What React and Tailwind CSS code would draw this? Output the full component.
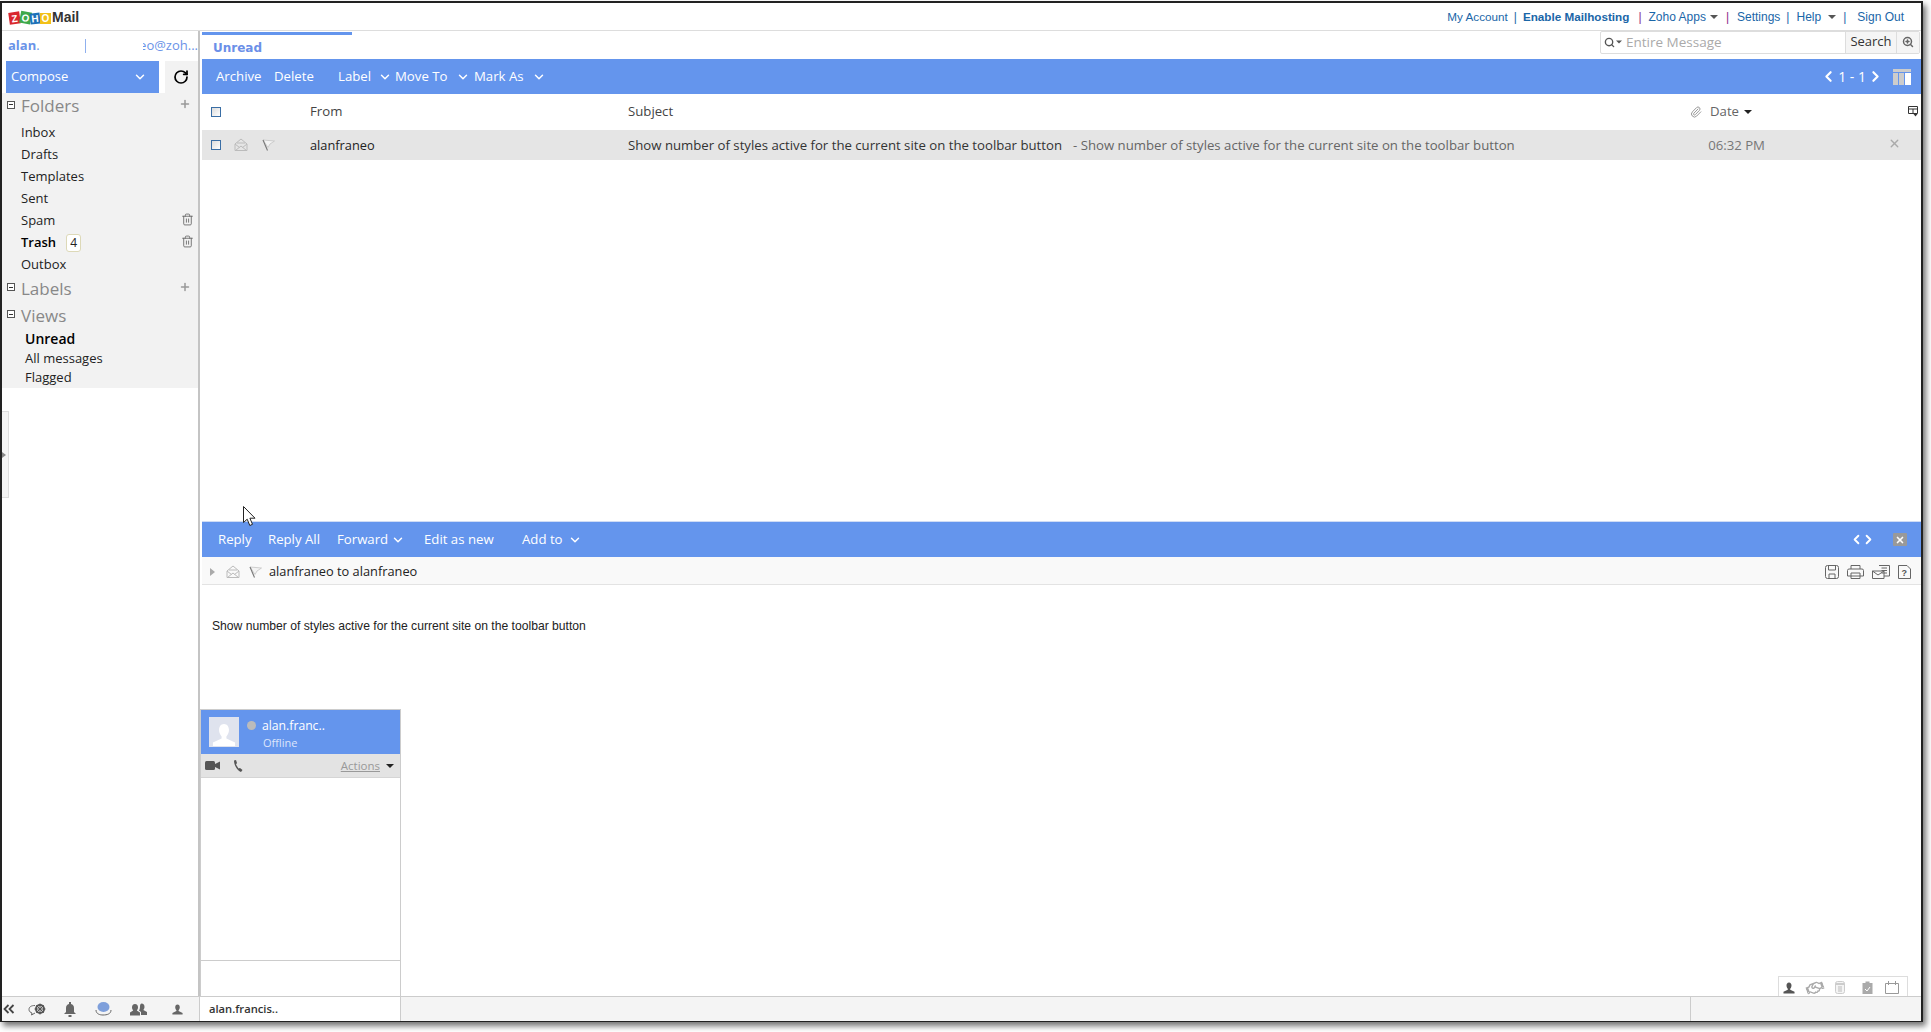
import React from "react";
import { ChevronDown, ChevronLeft, ChevronRight, Plus, RotateCw, Trash2, X, Paperclip, Search, ZoomIn } from "lucide-react";
import { FaRegHandshake } from "react-icons/fa";

const Chev = ({ className = "" }) => <ChevronDown size={14} strokeWidth={2.5} className={`text-white ${className}`} />;
const Caret = ({ className = "" }) => (
  <span className={`inline-block w-0 h-0 border-l-[4px] border-r-[4px] border-t-[4px] border-l-transparent border-r-transparent ${className}`} />
);
const Minus = () => (
  <span className="flex items-center justify-center w-[8px] h-[8px] border border-[#555] bg-white shrink-0">
    <span className="w-[4px] h-px bg-[#333]" />
  </span>
);
const Check = () => <span className="block w-[10px] h-[10px] border border-[#3a6ea5] bg-gradient-to-br from-[#dcdcdc] to-white" />;
const Env = ({ c = "#bbb" }) => (
  <svg width="14" height="14" viewBox="0 0 14 14" fill="none" stroke={c} strokeWidth="1">
    <path d="M1 6 L7 1 L13 6 V12.5 H1 Z M1 6 L5.5 9.5 M13 6 L8.5 9.5 M1.5 12.5 L7 8 L12.5 12.5 M3 5 H11" />
  </svg>
);
const Flag = () => (
  <svg width="13" height="12" viewBox="0 0 13 12">
    <path d="M1 1 L12.5 2 L8 5 L6 8.5 Z" fill="#f3f3f3" stroke="#c4c4c4" strokeWidth="0.8" />
    <path d="M1 1 L5.5 11.5" stroke="#777" strokeWidth="1.1" />
  </svg>
);
const Logo = () => (
  <svg width="43" height="16" viewBox="0 0 43 16">
    <g transform="rotate(-8 7 8)"><rect x="1" y="2" width="11" height="12" fill="#d9272e" /><text x="6.5" y="12" fontSize="10" fontWeight="700" fill="#fff" textAnchor="middle" fontFamily="Liberation Sans">Z</text></g>
    <g transform="rotate(10 17 8)"><rect x="12" y="1.5" width="11" height="12" fill="#3ea94a" /><text x="17.5" y="11.5" fontSize="10" fontWeight="700" fill="#fff" textAnchor="middle" fontFamily="Liberation Sans">O</text></g>
    <g transform="rotate(-6 28 8)"><rect x="22" y="3" width="10" height="11" fill="#1d71b8" /><text x="27" y="12" fontSize="10" fontWeight="700" fill="#fff" textAnchor="middle" fontFamily="Liberation Sans">H</text></g>
    <g><rect x="32" y="3" width="11" height="11" fill="#f2c018" /><text x="37.5" y="12" fontSize="10" fontWeight="700" fill="#fff" textAnchor="middle" fontFamily="Liberation Sans">O</text></g>
  </svg>
);
const Sep = ({ c = "text-[#1a66a8]", className = "" }) => <span className={`${c} ${className}`}>|</span>;

const Folder = ({ name, bold, trash, badge }) => (
  <div className={`flex items-center h-[22px] pl-[19px] pr-[3px] text-[13px] text-[#222] ${bold ? "font-semibold text-black" : ""}`}>
    <span>{name}</span>
    {badge && <span className="ml-[10px] flex items-center justify-center w-[15px] h-[18px] rounded-[3px] border border-[#ddd9b8] bg-white text-[12px] font-normal text-[#222]">{badge}</span>}
    {trash && <Trash2 size={13} strokeWidth={1.6} className="ml-auto -mt-[4px] text-[#666]" />}
  </div>
);
const Section = ({ name, plus, className = "" }) => (
  <div className={`flex items-center pl-[5px] pr-[6px] text-[#888] text-[17px] ${className}`}>
    <span className="-mt-[3px]"><Minus /></span>
    <span className="ml-[6px]">{name}</span>
    {plus && <Plus size={12} strokeWidth={3} className="ml-auto -mt-[4px] text-[#999]" />}
  </div>
);
const BarItem = ({ children, className = "" }) => <span className={`text-white text-[13.2px] ${className}`}>{children}</span>;

const Person = ({ c = "#555", s = 13 }) => (
  <svg width={s} height={s} viewBox="0 0 13 13" fill={c}>
    <path d="M6.5 0.5 C8.3 0.5 9.2 2 9.2 3.7 C9.2 5.4 8.4 6.6 7.8 7.3 L7.8 8.4 L12.5 10.5 V12.5 H0.5 V10.5 L5.2 8.4 L5.2 7.3 C4.6 6.6 3.8 5.4 3.8 3.7 C3.8 2 4.7 0.5 6.5 0.5 Z" />
  </svg>
);

export default function App() {
  return (
    <div className="w-[1931px] h-[1032px] bg-white overflow-hidden pt-px relative">
      <div className="w-[1923px] h-[1021px] border-2 border-b-[1px] border-[#222] shadow-[3px_4px_6px_rgba(0,0,0,0.55)] bg-white flex flex-col font-['Open_Sans',sans-serif]">
        {/* top header */}
        <div className="h-[28px] shrink-0 border-b border-[#ddd] flex items-center justify-between pl-[6px] pr-[17px]">
          <div className="flex items-center gap-[1px] mt-[2px]">
            <Logo />
            <span className="font-['Liberation_Sans',sans-serif] font-bold text-[14px] text-[#333]">Mail</span>
          </div>
          <div className="flex items-center font-['Liberation_Sans',sans-serif] text-[12px] text-[#1a66a8]">
            <span className="text-[11.7px]">My Account</span><Sep className="ml-[6px]" />
            <span className="ml-[6px] font-bold text-[11.7px]">Enable Mailhosting</span>
            <Sep c="text-[#8a2a8a]" className="ml-[9px]" />
            <span className="ml-[7px]">Zoho Apps</span><Caret className="border-t-[#555] ml-[4px]" />
            <Sep c="text-[#8a2a8a]" className="ml-[8px]" />
            <span className="ml-[8px]">Settings</span><Sep className="ml-[6px]" />
            <span className="ml-[7px]">Help</span><Caret className="border-t-[#555] ml-[7px]" />
            <Sep className="ml-[7px]" />
            <span className="ml-[11px]">Sign Out</span>
          </div>
        </div>

        {/* body */}
        <div className="flex-1 flex relative min-h-0">
          {/* sidebar */}
          <div className="w-[198px] shrink-0 border-r-2 border-[#c4c4c4] relative">
            <div className="h-[30px] flex items-center pl-[6px] text-[13px] text-[#6a93e8]">
              <span className="font-bold w-[77px]">alan<span className="font-normal">.</span></span>
              <span className="w-px h-[14px] bg-[#8fb0ee]" />
              <span className="ml-auto w-[55px] flex justify-end whitespace-nowrap overflow-hidden">eo@zoh...</span>
            </div>
            <div className="flex h-[32px] pl-[4px] gap-[6px]">
              <div className="w-[153px] bg-[#6495ed] flex items-center justify-between pl-[5px] pr-[12px] text-white text-[13px]">
                <span>Compose</span><Chev />
              </div>
              <div className="w-[33px] bg-[#f2f2f2] flex items-center justify-center pr-[2px]">
                <RotateCw size={16} strokeWidth={2.6} className="text-black" />
              </div>
            </div>
            <div className="bg-[#f2f2f2] h-[295px] pt-px pr-px">
              <Section name="Folders" plus className="h-[24px]" />
              <div className="pt-[4px]">
                <Folder name="Inbox" />
                <Folder name="Drafts" />
                <Folder name="Templates" />
                <Folder name="Sent" />
                <Folder name="Spam" trash />
                <Folder name="Trash" bold trash badge="4" />
                <Folder name="Outbox" />
              </div>
              <Section name="Labels" plus className="h-[27px] -mt-px" />
              <Section name="Views" className="h-[27px]" />
              <div className="pl-[23px] -mt-px text-[#222]">
                <div className="h-[21px] flex items-center text-[14px] font-semibold text-black">Unread</div>
                <div className="h-[19px] flex items-center text-[13px]">All messages</div>
                <div className="h-[19px] flex items-center text-[13px]">Flagged</div>
              </div>
            </div>
            <div className="absolute left-0 top-[380px] w-[7px] h-[87px] bg-[#f4f4f4] border border-l-0 border-[#ddd] flex items-center">
              <span className="w-0 h-0 border-y-[3px] border-l-[4px] border-y-transparent border-l-[#888]" />
            </div>
          </div>

          {/* main */}
          <div className="flex-1 min-w-0 flex flex-col ml-[2px] mr-0">
            <div className="h-[28px] shrink-0 relative flex items-center">
              <div className="w-[150px] h-full border-t-[3px] border-[#6495ed] mt-[2px] pl-[11px] flex items-center font-['DejaVu_Sans',sans-serif] font-bold text-[12px] text-[#6b8fe8]">Unread</div>
              <div className="ml-auto mr-px -mt-[6px] w-[320px] h-[23px] border border-[#ddd] rounded-[2px] flex items-stretch text-[13.5px]">
                <div className="flex-1 flex items-center pl-[3px] text-[#aaa]">
                  <Search size={11} strokeWidth={3} className="text-[#555]" />
                  <Caret className="border-t-[#555] scale-75" />
                  <span className="ml-[3px]">Entire Message</span>
                </div>
                <div className="w-[51px] border-l border-[#ddd] bg-[#f5f5f5] flex items-center justify-center text-[#333] text-[13px]">Search</div>
                <div className="w-[23px] border-l border-[#ddd] bg-[#f5f5f5] flex items-center justify-center">
                  <ZoomIn size={12} strokeWidth={3} className="text-[#666]" />
                </div>
              </div>
            </div>

            <div className="h-[35px] shrink-0 bg-[#6495ed] flex items-center pl-[14px] pr-[10px]">
              <BarItem className="w-[58px]">Archive</BarItem>
              <BarItem className="w-[64px]">Delete</BarItem>
              <BarItem className="w-[40px]">Label</BarItem><Chev className="mr-[3px]" />
              <BarItem className="w-[61px]">Move To</BarItem><Chev className="mr-[4px]" />
              <BarItem className="w-[58px]">Mark As</BarItem><Chev />
              <div className="ml-auto flex items-center text-white text-[14px]">
                <ChevronLeft size={17} strokeWidth={3} />
                <span className="mx-[1px]">1 - 1</span>
                <ChevronRight size={17} strokeWidth={3} />
                <span className="ml-[9px] w-[18px] h-[16px] flex flex-col gap-px">
                  <span className="h-[3px] bg-[#ccc]" />
                  <span className="flex-1 flex gap-px">
                    <span className="w-[5px] bg-[#ccc]" /><span className="w-[5px] bg-[#ccc]" /><span className="flex-1 bg-white" />
                  </span>
                </span>
              </div>
            </div>

            <div className="h-[36px] shrink-0 flex items-center relative text-[13.2px] text-[#444] pb-px">
              <span className="ml-[9px]"><Check /></span>
              <span className="ml-[89px] w-[318px]">From</span>
              <span>Subject</span>
              <span className="ml-auto mr-[8px] flex items-center"><Paperclip size={12} className="text-[#999]" /></span>
              <span className="text-[#666]">Date</span>
              <Caret className="border-t-[#222] ml-[5px] mr-[169px]" />
              <svg className="absolute right-[3px] top-[12px]" width="10" height="11" viewBox="0 0 10 11" fill="none" stroke="#333">
                <path d="M.5 .5 H9.5 V7.5 H.5 Z M.5 3 H9.5 M5 3 V7.5" />
                <path d="M5.5 8 H9.5 L7.5 10.5 Z" fill="#333" stroke="none" />
              </svg>
            </div>
            <div className="h-[30px] shrink-0 bg-[#e5e5e5] flex items-center text-[13.2px] pt-px">
              <span className="ml-[9px] w-[17px] -mt-px"><Check /></span>
              <span className="ml-[6px] mr-[14px] -mt-px"><Env /></span>
              <span className="-mt-px"><Flag /></span>
              <span className="ml-[35px] w-[318px] text-[#222] text-[12.8px]">alanfraneo</span>
              <span className="text-[#333] whitespace-nowrap">Show number of styles active for the current site on the toolbar button</span>
              <span className="ml-[11px] text-[#666] whitespace-nowrap">- Show number of styles active for the current site on the toolbar button</span>
              <span className="ml-auto text-[#777]">06:32 PM</span>
              <X size={13} strokeWidth={2.5} className="ml-[123px] mr-[20px] -mt-[4px] text-[#aaa]" />
            </div>
            <div className="h-[361px] shrink-0" />

            <div className="h-[36px] shrink-0 border-t border-[#cfdcf5] bg-[#6495ed] flex items-center pl-[16px] pr-[14px]">
              <BarItem className="w-[50px]">Reply</BarItem>
              <BarItem className="w-[69px]">Reply All</BarItem>
              <BarItem className="w-[54px]">Forward</BarItem><Chev className="mr-[19px]" />
              <BarItem className="w-[98px]">Edit as new</BarItem>
              <BarItem className="w-[46px]">Add to</BarItem><Chev />
              <div className="ml-auto flex items-center text-white">
                <ChevronLeft size={15} strokeWidth={3} className="-mr-[3px]" />
                <ChevronRight size={15} strokeWidth={3} />
                <span className="ml-[17px] w-[14px] h-[13px] rounded-[1px] bg-[#999] flex items-center justify-center">
                  <X size={10} strokeWidth={4} className="text-white" />
                </span>
              </div>
            </div>
            <div className="h-[28px] shrink-0 bg-[#f9f9f9] border-b border-[#e3e3e3] flex items-center pl-[8px] pt-[2px] text-[12.8px] text-[#222]">
              <span className="w-0 h-0 border-y-[4px] border-l-[5px] border-y-transparent border-l-[#aaa]" />
              <span className="ml-[11px] mr-[9px]"><Env /></span>
              <Flag />
              <span className="ml-[7px]">alanfraneo to alanfraneo</span>
              <div className="ml-auto mr-[10px] flex items-center gap-[8px] text-[#666]">
                <svg width="14" height="14" viewBox="0 0 14 14" fill="none" stroke="#666"><rect x="0.5" y="0.5" width="13" height="13" rx="2" /><path d="M3.5 .5 V5 H10.5 V.5 M4 13.5 V9 H10 V13.5" /></svg>
                <svg width="17" height="14" viewBox="0 0 17 14" fill="none" stroke="#666"><path d="M4 4 V.5 H13 V4 M.5 11 V5.5 Q.5 4 2 4 H15 Q16.5 4 16.5 5.5 V11 H.5 Z M4 8 H13 V13.5 H4 Z" /></svg>
                <svg width="18" height="14" viewBox="0 0 18 14" fill="none" stroke="#666"><path d="M7 .5 H17.5 V11 H12 M9.5 3 H15 M9.5 5.5 H15 M9.5 8 H15 M.5 6 H12 V13.5 H.5 Z M.5 6 L6 10 L12 6" /></svg>
                <svg width="13" height="14" viewBox="0 0 13 14" fill="none" stroke="#666"><path d="M.5 .5 H9 L12.5 4 V13.5 H.5 Z" /><text x="3.5" y="10.5" fontSize="9" fontWeight="700" fill="#555" stroke="none" fontFamily="Liberation Sans">?</text></svg>
              </div>
            </div>
            <div className="flex-1 pl-[10px] pt-[34px] font-['Liberation_Sans',sans-serif] text-[12.15px] text-[#222] leading-[14px] relative">
              Show number of styles active for the current site on the toolbar button
              <div className="absolute right-[13px] bottom-0 w-[130px] h-[20px] border border-b-0 border-[#ddd] flex items-center pl-[4px] pt-[2px]">
                <Person c="#555" s={12} />
                <FaRegHandshake size={18} className="ml-[11px] text-[#aaa] -rotate-[20deg]" />
                <svg className="ml-[11px]" width="10" height="13" viewBox="0 0 10 13"><rect x=".5" y=".5" width="9" height="12" rx="2" fill="#f4f4f4" stroke="#ccc" /><path d="M.5 3 H9.5" stroke="#ccc" strokeWidth="2" /><path d="M3 6 H7 M3 8 H7 M3 10 H7" stroke="#bbb" /></svg>
                <svg className="ml-[17px]" width="11" height="13" viewBox="0 0 11 13" fill="#aaa"><path d="M.5 2 H3.5 V.5 H7.5 V2 H10.5 V13 H.5 Z" /><path d="M3 8 L5 10 L8 6" stroke="#fff" fill="none" /></svg>
                <svg className="ml-[12px]" width="14" height="13" viewBox="0 0 14 13" fill="none" stroke="#999"><path d="M.5 2.5 H13.5 V12.5 H.5 Z M3.5 0 V4 M10.5 0 V4" /></svg>
              </div>
            </div>
          </div>

          {/* floating chat window */}
          <div className="absolute left-[198px] bottom-0 w-[201px] h-[287px] border-x border-t border-[#ccc] bg-white flex flex-col">
            <div className="h-[44px] shrink-0 bg-[#6495ed] flex items-center pl-[8px] ml-0">
              <div className="w-[30px] h-[30px] bg-[#dfe3ee] flex items-end justify-center overflow-hidden"><Person c="#fff" s={24} /></div>
              <span className="ml-[8px] self-start mt-[11px] w-[9px] h-[9px] rounded-full bg-[#bbb]" />
              <div className="ml-[6px] mt-[4px] flex flex-col text-white leading-none">
                <span className="text-[12.2px]">alan.franc..</span>
                <span className="text-[11px] mt-[4px] ml-px text-[#dde6fb]">Offline</span>
              </div>
            </div>
            <div className="h-[24px] shrink-0 bg-[#e3e3e3] border-b border-[#d5d5d5] flex items-center pl-[4px] pr-[6px]">
              <svg width="15" height="9" viewBox="0 0 15 9" fill="#555"><rect width="10" height="9" rx="1.5" /><path d="M10 3 L15 .5 V8.5 L10 6 Z" /></svg>
              <svg className="ml-[13px]" width="10" height="12" viewBox="0 0 10 12" fill="#555"><path d="M1 0.5 L3 0 L4 3 L3 4.5 L5.5 8.5 L7 8 L9.5 10 L8 12 C5 11 1 6 1 0.5 Z" /></svg>
              <span className="ml-auto mt-px text-[11.5px] text-[#999] underline">Actions</span>
              <Caret className="border-t-[#222] ml-[6px]" />
            </div>
            <div className="flex-1" />
            <div className="h-[36px] shrink-0 border-t border-[#ccc]" />
          </div>
        </div>

        {/* bottom bar */}
        <div className="h-[25px] shrink-0 border-t border-[#ccc] bg-[#f4f4f4] flex items-stretch">
          <div className="w-[198px] border-r border-[#ccc] relative flex items-center gap-[13px] pl-[1px]">
            <svg width="12" height="10" viewBox="0 0 12 10" fill="none" stroke="#444" strokeWidth="1.8"><path d="M5.5 1 L1.5 5 L5.5 9 M10.5 1 L6.5 5 L10.5 9" /></svg>
            <svg width="18" height="13" viewBox="0 0 18 13"><path d="M7 2.5 C3 2.5 1 4 1 6.5 C1 8.5 2.5 9.5 4 10 L3.5 12 L7 10" fill="none" stroke="#666" /><circle cx="12" cy="6" r="4" fill="none" stroke="#555" strokeWidth="2" /><path d="M12 .5 V11.5 M6.5 6 H17.5 M8.2 2.2 L15.8 9.8 M15.8 2.2 L8.2 9.8" stroke="#555" strokeWidth="1" /></svg>
            <svg className="ml-[5px]" width="12" height="15" viewBox="0 0 12 15" fill="#666"><path d="M5 0 H7 V2 C9 2.6 10 4 10 6 V10 L12 12 H0 L2 10 V6 C2 4 3 2.6 5 2 Z M4.5 13 H7.5 V15 H4.5 Z" /></svg>
            <svg className="ml-[6px]" width="17" height="15" viewBox="0 0 17 15"><ellipse cx="8.5" cy="5" rx="6" ry="5" fill="#7e9fdb" /><path d="M1 8 C1 12 5 13 8 13 C12 13 16 12 16 8" fill="none" stroke="#666" /></svg>
            <svg className="ml-[5px]" width="17" height="13" viewBox="0 0 17 13" fill="#666"><path d="M5 1 C7 1 8 2.6 8 4.4 C8 5.8 7.2 6.8 6.8 7.4 L10 9.6 V12.5 H0 V9.6 L3.2 7.4 C2.8 6.8 2 5.8 2 4.4 C2 2.6 3 1 5 1 Z" /><path d="M11.5 0.5 C13.5 .5 14.5 2 14.5 4 C14.5 5.4 13.8 6.4 13.3 7 L17 9 V12 H11 V9 L9 7.5 C9.6 6.5 10 5.4 10 4 C10 2.6 10 1 11.5 .5 Z" /></svg>
            <span className="ml-[12px]"><Person c="#666" s={11} /></span>
          </div>
          <div className="w-[201px] bg-white border-r border-[#ccc] pl-[9px] flex items-center text-[11.2px] font-semibold text-[#333]">alan.francis..</div>
          <div className="w-[1290px] border-r border-[#ccc]" />
          <div className="flex-1" />
        </div>
      </div>

      {/* mouse pointer */}
      <svg className="absolute left-[243px] top-[506px]" width="13" height="21" viewBox="0 0 13 21">
        <path d="M.5 .5 V16.5 L4.2 13.2 L6.8 19.5 L9.5 18.3 L6.9 12.2 H12 Z" fill="#fff" stroke="#222" strokeWidth="1" />
      </svg>
    </div>
  );
}
